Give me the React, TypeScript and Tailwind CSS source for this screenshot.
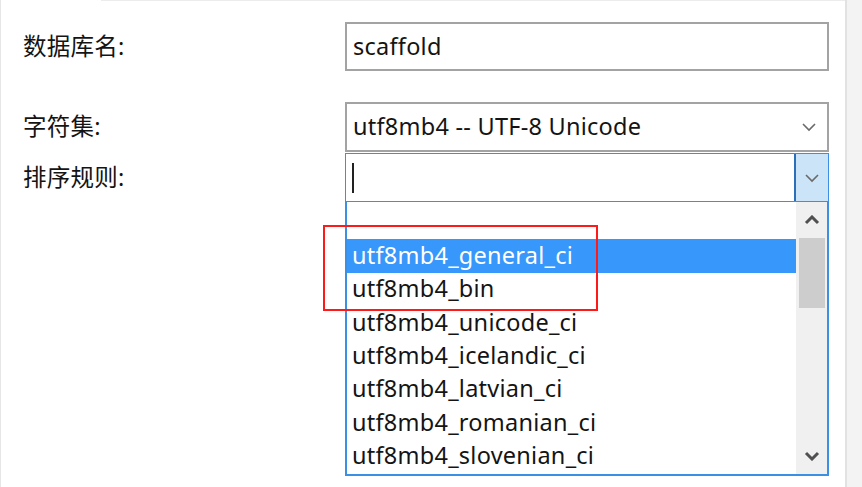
import React from "react";

const Chevron = ({ up = false, bold = false }: { up?: boolean; bold?: boolean }) => (
  <svg width="16" height="10" viewBox="0 0 16 10" className="block">
    <polyline
      points={up ? "2,8 8,2 14,8" : "2,2 8,8 14,2"}
      fill="none"
      stroke={bold ? "#505050" : "#6a6a6a"}
      strokeWidth={bold ? 3 : 1.6}
      strokeLinejoin="miter"
    />
  </svg>
);

const items = [
  "",
  "utf8mb4_general_ci",
  "utf8mb4_bin",
  "utf8mb4_unicode_ci",
  "utf8mb4_icelandic_ci",
  "utf8mb4_latvian_ci",
  "utf8mb4_romanian_ci",
  "utf8mb4_slovenian_ci",
];

export default function App() {
  const font = { fontFamily: '"Noto Sans", "Noto Sans CJK SC", sans-serif' };
  return (
    <div
      className="w-[862px] h-[487px] bg-white flex overflow-hidden text-[#141414] text-[23.5px] tracking-[0.25px]"
      style={font}
    >
      <div className="relative flex-1 flex flex-col border-l border-[#e6e6e6] pt-[22px] pr-[16px] pl-[22px]">
        <div className="absolute top-0 left-[100px] right-0 h-px bg-[#ececec]" />
        {/* Row 1 */}
        <div className="flex items-center h-[49px]">
          <div className="w-[322px] leading-none">数据库名:</div>
          <div className="flex-1 h-full border-2 border-[#a3a3a3] flex items-center pl-[6px] leading-none">
            scaffold
          </div>
        </div>
        {/* Row 2 */}
        <div className="flex items-center h-[50px] mt-[31px]">
          <div className="w-[322px] leading-none">字符集:</div>
          <div className="flex-1 h-full border-2 border-[#a3a3a3] flex items-center pl-[6px] pr-[10px] leading-none">
            <span className="flex-1">utf8mb4 -- UTF-8 Unicode</span>
            <Chevron />
          </div>
        </div>
        {/* Row 3 */}
        <div className="flex items-start mt-px">
          <div className="w-[322px] h-[49px] flex items-center leading-none">排序规则:</div>
          <div className="flex-1 flex flex-col">
            <div className="h-[49px] border border-[#3b8fe4] flex">
              <div className="flex-1 flex items-center pl-[6px]">
                <div className="w-[2px] h-[30px] bg-[#222]" />
              </div>
              <div className="w-[34px] bg-[#cce4f7] border-l-2 border-[#2a6fb8] flex items-center justify-center">
                <Chevron />
              </div>
            </div>
            <div className="h-[274px] border-2 border-t-0 border-[#3b8fe4] flex">
              <div className="flex-1 flex flex-col pt-[4px]">
                {items.map((t, i) => (
                  <div
                    key={i}
                    className={
                      "h-[33.3px] flex items-center pl-[5px] leading-none " +
                      (i === 1 ? "bg-[#3797fb] text-white" : "")
                    }
                  >
                    {t}
                  </div>
                ))}
              </div>
              <div className="w-[31px] bg-[#f0f0f0] flex flex-col items-center">
                <div className="h-[36px] flex items-center justify-center">
                  <Chevron up bold />
                </div>
                <div className="w-[26px] h-[70px] bg-[#cdcdcd]" />
                <div className="flex-1" />
                <div className="h-[36px] flex items-center justify-center">
                  <Chevron bold />
                </div>
              </div>
            </div>
          </div>
        </div>
        {/* red highlight annotation */}
        <div className="absolute left-[322px] top-[225px] w-[275px] h-[86px] border-2 border-[#ff1a1a]" />
      </div>
      <div className="w-[17px] border-l-2 border-[#e2e2e2] bg-[#f3f3f3]" />
    </div>
  );
}
